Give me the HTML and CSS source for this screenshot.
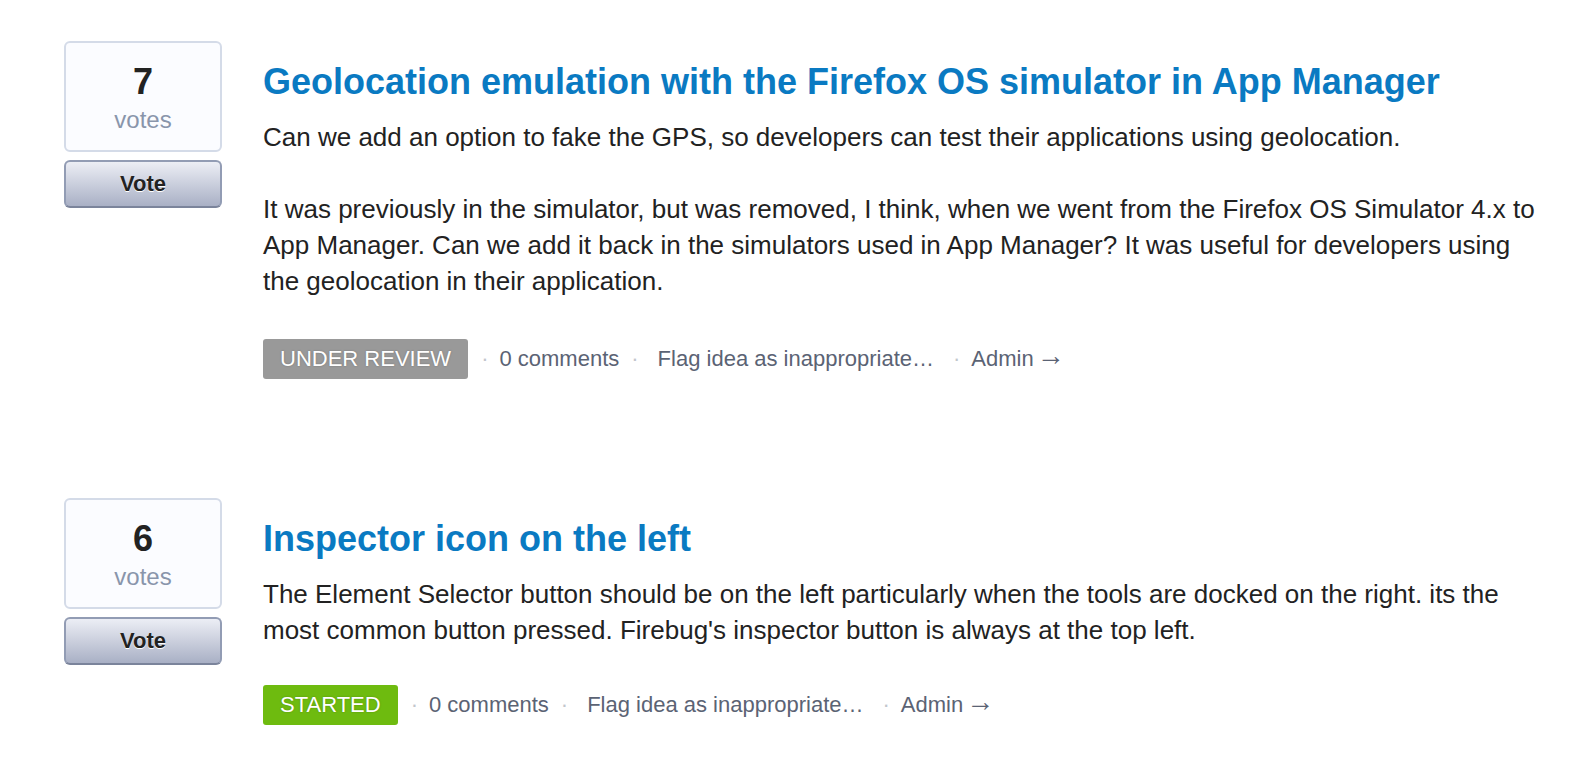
FILE: index.html
```html
<!DOCTYPE html>
<html>
<head>
<meta charset="utf-8">
<link rel="stylesheet" href="styles.css">
</head>
<body>
<div class="ideas">
  <div class="idea">
    <div class="vote-col">
      <div class="count-box">
        <div class="count">7</div>
        <div class="count-label">votes</div>
      </div>
      <button class="vote-btn">Vote</button>
    </div>
    <div class="content">
      <h2 class="title">Geolocation emulation with the Firefox OS simulator in App Manager</h2>
      <p class="desc">Can we add an option to fake the GPS, so developers can test their applications using geolocation.</p>
      <p class="desc">It was previously in the simulator, but was removed, I think, when we went from the Firefox OS Simulator 4.x to App Manager. Can we add it back in the simulators used in App Manager? It was useful for developers using the geolocation in their application.</p>
      <div class="meta">
        <span class="badge review">UNDER REVIEW</span>
        <span class="sep s1">·</span>
        <span class="link">0 comments</span>
        <span class="sep s2">·</span>
        <span class="link">Flag idea as inappropriate…</span>
        <span class="sep s3">·</span>
        <span class="link">Admin <span class="arrow">→</span></span>
      </div>
    </div>
  </div>
  <div class="idea">
    <div class="vote-col">
      <div class="count-box">
        <div class="count">6</div>
        <div class="count-label">votes</div>
      </div>
      <button class="vote-btn">Vote</button>
    </div>
    <div class="content">
      <h2 class="title">Inspector icon on the left</h2>
      <p class="desc">The Element Selector button should be on the left particularly when the tools are docked on the right. its the most common button pressed. Firebug's inspector button is always at the top left.</p>
      <div class="meta">
        <span class="badge started">STARTED</span>
        <span class="sep s1">·</span>
        <span class="link">0 comments</span>
        <span class="sep s2">·</span>
        <span class="link">Flag idea as inappropriate…</span>
        <span class="sep s3">·</span>
        <span class="link">Admin <span class="arrow">→</span></span>
      </div>
    </div>
  </div>
</div>
</body>
</html>
```
FILE: styles.css
```css
* { box-sizing: border-box; }
html, body { margin: 0; padding: 0; background: #fff; }
body {
  font-family: "Liberation Sans", Arial, sans-serif;
  color: #222;
  overflow: hidden;
}
.ideas {
  padding: 41px 30px 0 64px;
}
.idea {
  display: flex;
  gap: 41px;
  margin-bottom: 119px;
}
.vote-col {
  width: 158px;
  flex: none;
  display: flex;
  flex-direction: column;
  gap: 8px;
}
.count-box {
  height: 111px;
  border: 2px solid #d4dbe8;
  border-radius: 6px;
  background: #fbfcff;
  text-align: center;
  padding-top: 19px;
}
.count {
  font-size: 36px;
  font-weight: bold;
  line-height: 40px;
  color: #222;
}
.count-label {
  font-size: 24px;
  line-height: 36px;
  color: #8995ab;
}
.vote-btn {
  height: 48px;
  border: 2px solid #929cb4;
  border-bottom-color: #7b849b;
  border-radius: 6px;
  background: linear-gradient(#eceef5, #a9b0c5);
  font-family: "Liberation Sans", Arial, sans-serif;
  font-weight: bold;
  font-size: 22px;
  color: #222;
  text-shadow: 0 1px 0 #fff;
  padding: 0;
}
.content {
  flex: 1;
  min-width: 0;
}
.title {
  margin: 20px 0 0;
  font-size: 36px;
  line-height: 42px;
  font-weight: bold;
  color: #0a7ac2;
}
.desc {
  margin: 16px 0 36px;
  font-size: 26px;
  line-height: 36px;
  color: #222;
}
.desc + .desc { margin-top: 0; }
.desc:last-of-type { margin-bottom: 0; }
.meta {
  margin-top: 40px;
  display: flex;
  align-items: center;
  font-size: 22px;
  line-height: 26px;
  color: #5b6374;
}
.idea + .idea .meta { margin-top: 37px; }
.badge {
  color: #fff;
  padding: 0 17px;
  height: 40px;
  line-height: 40px;
  border-radius: 3px;
  text-shadow: 0 0 2px rgba(0,0,0,0.25);
}
.badge.review { background: #999; }
.badge.started { background: #6ebb0f; }
.sep { color: #c2c6cc; }
.s1 { margin: 0 11px 0 13px; }
.s2 { margin: 0 19px 0 12px; }
.s3 { margin: 0 11px 0 19px; }
.link { color: #5b6374; height: 26px; }
.arrow {
  font-size: 28px;
  line-height: 0;
  position: relative;
  top: -1px;
  margin-left: -3px;
}
```
